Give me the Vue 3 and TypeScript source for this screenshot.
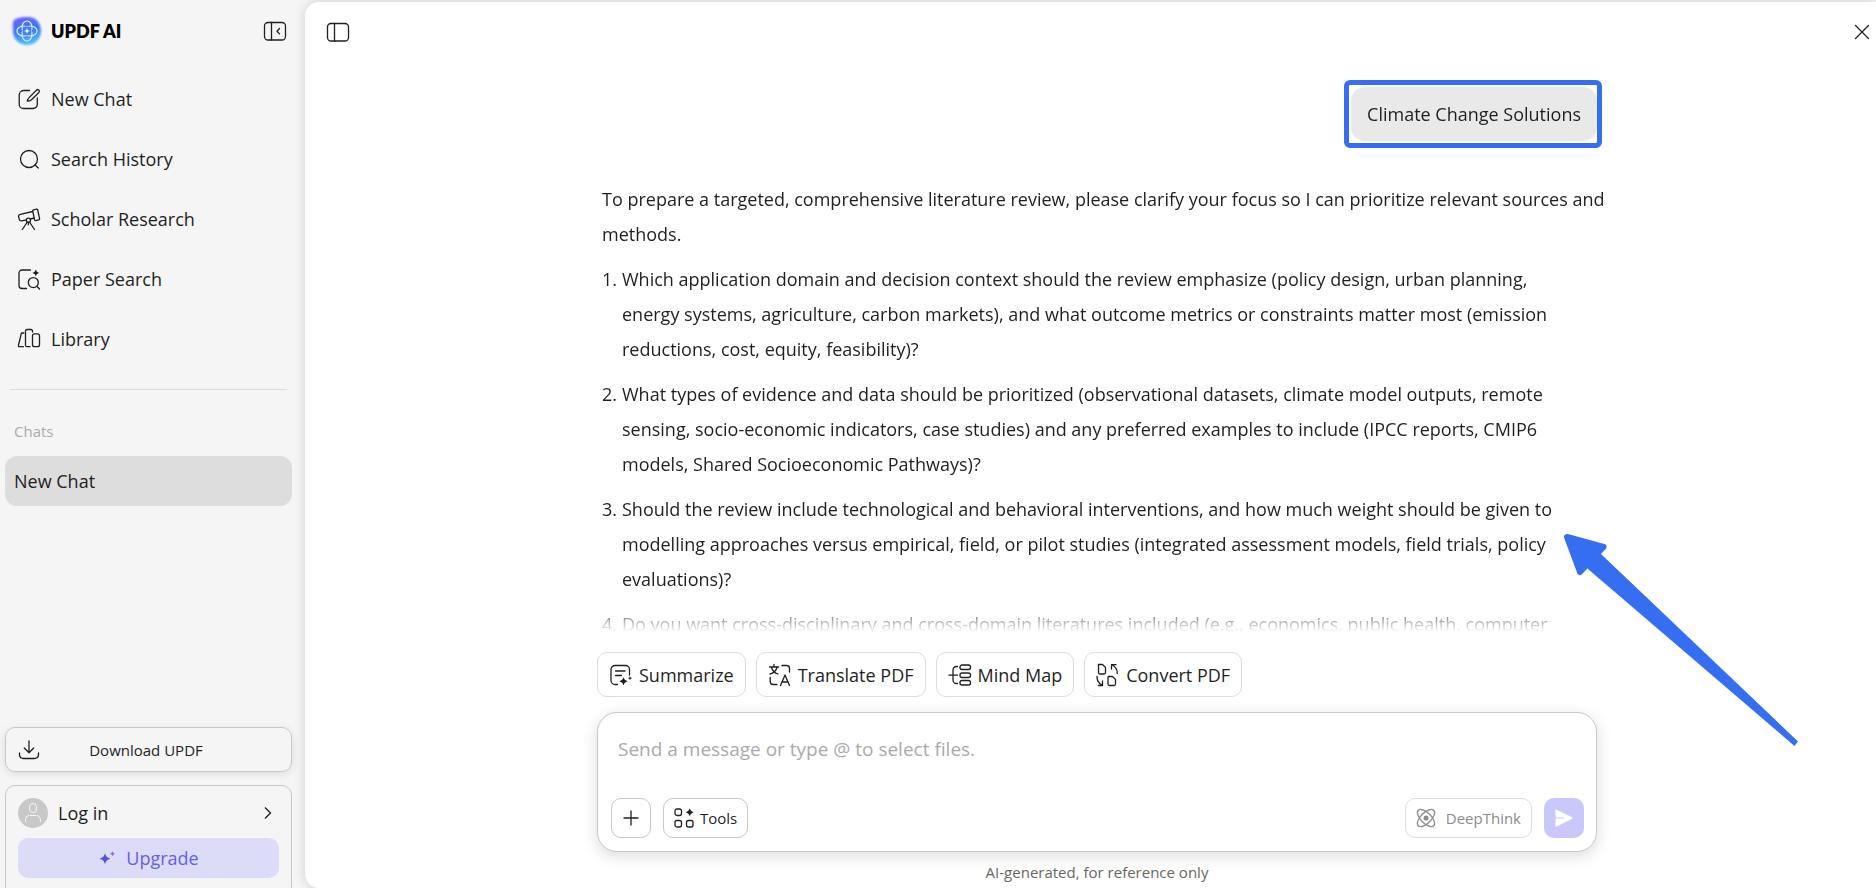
<script setup lang="ts">
import { ref } from 'vue'

interface NavItem { id: string; label: string }
interface Chip { id: string; label: string }

const navItems: NavItem[] = [
  { id: 'new', label: 'New Chat' },
  { id: 'search', label: 'Search History' },
  { id: 'scholar', label: 'Scholar Research' },
  { id: 'paper', label: 'Paper Search' },
  { id: 'library', label: 'Library' },
]

const chips: Chip[] = [
  { id: 'summarize', label: 'Summarize' },
  { id: 'translate', label: 'Translate PDF' },
  { id: 'mindmap', label: 'Mind Map' },
  { id: 'convert', label: 'Convert PDF' },
]

const questions: string[] = [
  'Which application domain and decision context should the review emphasize (policy design, urban planning, energy systems, agriculture, carbon markets), and what outcome metrics or constraints matter most (emission reductions, cost, equity, feasibility)?',
  'What types of evidence and data should be prioritized (observational datasets, climate model outputs, remote sensing, socio-economic indicators, case studies) and any preferred examples to include (IPCC reports, CMIP6 models, Shared Socioeconomic Pathways)?',
  'Should the review include technological and behavioral interventions, and how much weight should be given to modelling approaches versus empirical, field, or pilot studies (integrated assessment models, field trials, policy evaluations)?',
  'Do you want cross-disciplinary and cross-domain literatures included (e.g., economics, public health, computer',
]

const draft = ref('')
</script>

<template>
  <div class="app">
    <aside class="sidebar">
      <header class="brand">
        <svg class="logo" viewBox="0 0 30 30" aria-hidden="true">
          <defs>
            <linearGradient id="logoFill" x1="0.3" y1="0" x2="0.5" y2="1">
              <stop offset="0" stop-color="#6a63f5" />
              <stop offset="0.5" stop-color="#3b7bf6" />
              <stop offset="1" stop-color="#4fc4ff" />
            </linearGradient>
            <filter id="logoSoft" x="-10%" y="-10%" width="120%" height="120%">
              <feGaussianBlur stdDeviation="0.8" />
            </filter>
          </defs>
          <path d="M2 4C6 1 11 1 16 1c8 0 13 6 13 14 0 8-6 14-14 14S1 23 1 15C1 11 0 6 2 4z" fill="url(#logoFill)" filter="url(#logoSoft)" />
          <g fill="none" stroke="#d8ecff" stroke-width="1.2">
            <ellipse cx="15" cy="11.500" rx="5" ry="6.500" />
            <ellipse cx="15" cy="18.500" rx="5" ry="6.500" />
            <ellipse cx="11.500" cy="15" rx="6.500" ry="5" />
            <ellipse cx="18.500" cy="15" rx="6.500" ry="5" />
          </g>
          <circle cx="15" cy="15" r="4.500" fill="#3f7ff6" />
          <path d="M15 12l.8 2.200 2.200.8-2.200.8-.8 2.200-.8-2.200-2.200-.8 2.200-.8z" fill="#fff" />
        </svg>
        <span class="brand-name">UPDF AI</span>
        <button class="icon-btn" type="button" aria-label="Collapse sidebar">
          <svg class="ico" viewBox="0 0 24 24">
            <rect x="1.500" y="3.500" width="21" height="17.500" rx="3.500" />
            <path d="M8.500 3.500v17.500M16.500 9.500l-2.500 2.700 2.500 2.700" />
          </svg>
        </button>
      </header>

      <nav class="nav">
        <button v-for="item in navItems" :key="item.id" class="nav-item" type="button">
          <svg class="ico" viewBox="0 0 24 24" aria-hidden="true">
            <template v-if="item.id === 'new'">
              <path d="M12.500 3.500H6.500A4.500 4.500 0 0 0 2.200 8v9.200a4.300 4.300 0 0 0 4.300 4.300H16a4.300 4.300 0 0 0 4.300-4.300V11" />
              <path d="M10.300 14.200c.2-1.600.8-2.600 1.800-3.600l7.300-7.400a1.600 1.600 0 0 1 2.500 2.300l-7.400 7.200c-1 1-2.500 1.500-4.200 1.500z" />
            </template>
            <template v-else-if="item.id === 'search'">
              <circle cx="12" cy="12" r="8.500" />
              <path d="M18 18l3.300 3" />
            </template>
            <template v-else-if="item.id === 'scholar'">
              <path d="M16.500 2.900l3-.7a1 1 0 0 1 1.200.8l1.900 8.700a1 1 0 0 1-.8 1.200l-3 .7a1 1 0 0 1-1.200-.8L15.700 4a1 1 0 0 1 .8-1.100zM15.700 4.500L3.300 7.300a2 2 0 0 0-1.700 2.300l.7 2.700a2 2 0 0 0 2.400 1.500l4.700-1M13.400 12l4-1" />
              <circle cx="11.400" cy="13.200" r="2.100" />
              <path d="M10.300 15l-5 7.500M12.500 15l5 7.500M11.400 15.300v2.500" />
            </template>
            <template v-else-if="item.id === 'paper'">
              <path d="M13.500 3H5a3 3 0 0 0-3 3v12.500a3 3 0 0 0 3 3h4.500" />
              <circle cx="16.300" cy="15.600" r="5" />
              <path d="M20 19.500l2.500 2.500" />
              <path class="solid" d="M18.800 2.500l1.100 2.300 2.300 1.100-2.300 1.100-1.100 2.300-1.100-2.300-2.300-1.100 2.300-1.100z" />
            </template>
            <template v-else>
              <path d="M6.800 6H5.200a1 1 0 0 0-1 .8L1.400 18.500a1 1 0 0 0 1 1.200h4M15.500 5V4a1.500 1.500 0 0 0-1.500-1.500h-4A1.500 1.500 0 0 0 8.500 4v14.200a1.500 1.500 0 0 0 1.500 1.500h3" />
              <rect x="15.500" y="6.800" width="7" height="12.900" rx="2" />
            </template>
          </svg>
          {{ item.label }}
        </button>
      </nav>

      <section class="history">
        <h2>Chats</h2>
        <button class="history-item" type="button">New Chat</button>
      </section>

      <footer class="account-area">
        <button class="download" type="button">
          <svg class="ico" viewBox="0 0 24 24" aria-hidden="true">
            <path d="M12 3v11.500M7.300 10l4.700 4.700 4.700-4.700M2.500 15v1.800A4 4 0 0 0 6.500 20.500h11a4 4 0 0 0 4-3.700V15" />
          </svg>
          <span>Download UPDF</span>
        </button>
        <div class="account">
          <button class="login" type="button">
            <span class="avatar">
              <svg viewBox="0 0 30 30" aria-hidden="true">
                <rect x="11.500" y="5.500" width="7" height="9" rx="3.500" />
                <path d="M7.500 24v-2.500a4 4 0 0 1 4-4h7a4 4 0 0 1 4 4V24" />
              </svg>
            </span>
            <span class="login-label">Log in</span>
            <svg class="chevron" viewBox="0 0 12 12" aria-hidden="true"><path d="M3 0.500l5.500 5.500-5.500 5.500" /></svg>
          </button>
          <button class="upgrade" type="button">
            <svg viewBox="0 0 18 18" aria-hidden="true">
              <path d="M7 4c.9 3.600 1.900 4.600 5.500 5.700-3.600 1.100-4.600 2.100-5.500 5.700-.9-3.600-1.900-4.600-5.500-5.700C5.100 8.600 6.100 7.600 7 4z" fill="#5450e6" />
              <path d="M14.500 2c.4 1.700.9 2.300 2.700 2.800-1.800.5-2.300 1.100-2.700 2.800-.4-1.700-.9-2.300-2.700-2.800 1.800-.5 2.300-1.100 2.700-2.800z" fill="#a05fe8" />
            </svg>
            Upgrade
          </button>
        </div>
      </footer>
    </aside>

    <main class="main">
      <header class="topbar">
        <button class="icon-btn" type="button" aria-label="Toggle panel">
          <svg class="ico" viewBox="0 0 24 24">
            <rect x="1.500" y="3.500" width="21" height="17.500" rx="3.500" />
            <path d="M8.500 3.500v17.500" />
          </svg>
        </button>
        <button class="icon-btn" type="button" aria-label="Close">
          <svg class="ico" viewBox="0 0 24 24"><path d="M5.500 5.500l13 13M18.500 5.500l-13 13" /></svg>
        </button>
      </header>

      <div class="thread">
        <div class="column">
          <div class="prompt">
            <div class="highlight"><p class="bubble">Climate Change Solutions</p></div>
          </div>
          <article class="answer">
            <p>To prepare a targeted, comprehensive literature review, please clarify your focus so I can prioritize relevant sources and methods.</p>
            <ol>
              <li v-for="(question, index) in questions" :key="index">
                <span>{{ index + 1 }}.</span>
                <p>{{ question }}</p>
              </li>
            </ol>
          </article>
        </div>
      </div>

      <div class="dock">
        <div class="column">
          <svg class="pointer" viewBox="0 0 236 214" aria-hidden="true">
            <path d="M4 5L38.500 22.500L235 209.500L231.500 214L25 37z" />
            <path class="pointer-head" d="M4 5L40.500 15L17 40z" />
          </svg>
          <div class="chips">
            <button v-for="chip in chips" :key="chip.id" class="chip" type="button">
              <svg class="ico" viewBox="0 0 24 24" aria-hidden="true">
                <template v-if="chip.id === 'summarize'">
                  <path d="M8.500 21.500H6a4 4 0 0 1-4-4v-11a4 4 0 0 1 4-4h10.500a4 4 0 0 1 4 4V12M6.500 8H16M6.500 12.500h6" />
                  <path class="solid" d="M14.500 14c.8 2.600 1.600 3.400 4.200 4.200-2.600.8-3.400 1.600-4.200 4.200-.8-2.600-1.600-3.400-4.200-4.200 2.600-.8 3.400-1.600 4.200-4.200zM21 13l.6 1.600 1.600.6-1.600.6-.6 1.600-.6-1.600-1.600-.6 1.600-.6z" />
                </template>
                <template v-else-if="chip.id === 'translate'">
                  <path d="M6 1.500V4M1.500 4h9M9 4.500c-.8 3-3 5.500-7 6.500M3.500 4.500c.8 3 3 5.500 6.500 6.500" />
                  <path d="M14 2.500h4.500a3 3 0 0 1 3 3V9M2.200 14.500v4a3 3 0 0 0 3 3H9" />
                  <path d="M12.500 22.500l4.500-10.500 4.500 10.500M14 19h6" />
                </template>
                <template v-else-if="chip.id === 'mindmap'">
                  <rect x="12" y="2" width="10.500" height="4.500" rx="2" />
                  <rect x="12" y="10" width="10.500" height="4.500" rx="2" />
                  <rect x="12" y="17.500" width="10.500" height="4.500" rx="2" />
                  <path d="M9.500 3.500H8.500a3.500 3.500 0 0 0-3.500 3.500v10a3.500 3.500 0 0 0 3.500 3.500h1M1 12.200h8.500" />
                </template>
                <template v-else>
                  <path d="M2.500 1.500h4l3 3V9.500a1.500 1.500 0 0 1-1.500 1.500H4A1.500 1.500 0 0 1 2.500 9.500z" />
                  <path d="M12.500 13.500h4l3 3v4.500a1.500 1.500 0 0 1-1.500 1.500h-4.500A1.500 1.500 0 0 1 12 21v-7z" />
                  <path d="M21.300 10.500c0-4-1.500-7-5.300-8.500M15.500 6V1.700H20M1 13.500c0 4 1.500 7 5.300 8.500M2.500 22.500h4V18" />
                </template>
              </svg>
              {{ chip.label }}
            </button>
          </div>

          <form class="composer" @submit.prevent>
            <textarea v-model="draft" rows="1" aria-label="Message" placeholder="Send a message or type @ to select files."></textarea>
            <div class="tools">
              <button class="tool square" type="button" aria-label="Add file">
                <svg class="ico small" viewBox="0 0 20 20"><path d="M10 3v14M3 10h14" /></svg>
              </button>
              <button class="tool" type="button">
                <svg class="ico small" viewBox="0 0 20 20" aria-hidden="true">
                  <rect x="1" y="1" width="6.500" height="6.500" rx="2" />
                  <rect x="1" y="12.500" width="6.500" height="6.500" rx="2" />
                  <rect x="12.500" y="12.500" width="6.500" height="6.500" rx="2" />
                  <path class="solid" d="M15.700.3c.9 2.500 1.500 3.100 4 4-2.500.9-3.100 1.500-4 4-.9-2.500-1.500-3.100-4-4 2.500-.9 3.100-1.500 4-4z" />
                </svg>
                Tools
              </button>
              <button class="tool think" type="button">
                <svg class="ico small" viewBox="0 0 20 20" aria-hidden="true">
                  <ellipse cx="10" cy="10" rx="11" ry="5.200" transform="rotate(45 10 10)" />
                  <ellipse cx="10" cy="10" rx="11" ry="5.200" transform="rotate(-45 10 10)" />
                  <circle class="core" cx="10" cy="10" r="2.500" />
                </svg>
                DeepThink
              </button>
              <button class="send" type="submit" aria-label="Send">
                <svg viewBox="0 0 20 20"><path d="M2.500 1.500L18 9.200a1 1 0 0 1 0 1.800L2.500 18.500a1 1 0 0 1-1.300-1.200L1.800 10.500H9.500V9.500H1.800L1.200 2.700A1 1 0 0 1 2.500 1.500z" /></svg>
              </button>
            </div>
          </form>
          <p class="notice">AI-generated, for reference only</p>
        </div>
      </div>
    </main>
  </div>
</template>

<style>
body {
  margin: 0;
  background: #f5f5f5;
}
</style>

<style scoped>
.app,
.app * {
  box-sizing: border-box;
}

.app {
  display: flex;
  height: 100vh;
  overflow: hidden;
  background: #f5f5f5;
  color: #1f1f1f;
  font: 18px/24px "Open Sans", "Noto Sans", sans-serif;
}

p,
h2,
ol {
  margin: 0;
  padding: 0;
}

button {
  margin: 0;
  padding: 0;
  border: 0;
  background: none;
  color: inherit;
  font: inherit;
  cursor: pointer;
}

.ico {
  flex: none;
  width: 24px;
  height: 24px;
  fill: none;
  stroke: currentColor;
  stroke-width: 1.3;
  stroke-linecap: round;
  stroke-linejoin: round;
  overflow: visible;
}

.ico.small {
  width: 20px;
  height: 20px;
}

.solid,
.core {
  fill: currentColor;
  stroke: none;
}

.icon-btn {
  display: flex;
}

.sidebar {
  display: flex;
  flex: none;
  flex-direction: column;
  width: 305px;
  padding: 0 13px 0 5px;
}

.brand {
  display: flex;
  align-items: center;
  height: 62px;
  padding: 0 5px 0 7px;
}

.logo {
  width: 30px;
  height: 30px;
  overflow: visible;
}

.brand-name {
  flex: 1;
  margin-left: 9px;
  color: #000;
  font: 800 18px/24px Lato, sans-serif;
}

.nav {
  display: flex;
  flex-direction: column;
  gap: 10px;
  margin: 12px 5px 0;
  padding-bottom: 25px;
  border-bottom: 1px solid #dcdce2;
}

.nav-item {
  display: flex;
  align-items: center;
  gap: 10px;
  height: 50px;
  padding: 0 7px;
}

.history {
  flex: 1;
  padding-top: 29px;
}

.history h2 {
  margin-bottom: 13px;
  padding-left: 9px;
  color: #aaa;
  font-size: 15px;
  font-weight: 400;
}

.history-item {
  width: 100%;
  height: 50px;
  padding: 0 9px;
  border-radius: 12px;
  background: #ddd;
  text-align: left;
}

.download {
  display: flex;
  align-items: center;
  width: 100%;
  height: 45px;
  padding: 0 40px 0 11px;
  border: 1px solid #c8c8c8;
  border-radius: 10px;
  box-shadow: 0 2px 8px rgba(0, 0, 0, 0.1);
  font-size: 15px;
}

.download span {
  flex: 1;
}

.account {
  height: 116px;
  margin: 13px 0 -13px;
  padding: 12px 12px 0;
  border: 1px solid #c8c8c8;
  border-radius: 10px;
}

.login {
  display: flex;
  align-items: center;
  width: 100%;
  height: 30px;
  padding-right: 5px;
}

.avatar {
  width: 30px;
  height: 30px;
  border-radius: 50%;
  background: #c8c8c8;
}

.avatar svg {
  display: block;
  fill: none;
  stroke: #f5f5f5;
}

.login-label {
  flex: 1;
  margin-left: 10px;
  text-align: left;
}

.chevron {
  width: 12px;
  height: 12px;
  fill: none;
  stroke: currentColor;
  stroke-width: 1.3;
}

.upgrade {
  display: flex;
  align-items: center;
  justify-content: center;
  gap: 10px;
  width: 100%;
  height: 40px;
  margin-top: 10px;
  border-radius: 10px;
  background: #dcdcf9;
  color: #6460e0;
}

.upgrade svg {
  width: 18px;
  height: 18px;
}

.main {
  display: flex;
  flex: 1;
  flex-direction: column;
  min-width: 0;
  margin-top: 2px;
  border-radius: 14px 0 0 14px;
  background: #fff;
  box-shadow: 0 0 12px rgba(0, 0, 0, 0.16);
}

.topbar {
  display: flex;
  flex: none;
  align-items: center;
  justify-content: space-between;
  height: 60px;
  padding: 0 2px 0 21px;
}

.column {
  position: relative;
  width: 100%;
  max-width: 1000px;
  margin: 0 auto;
}

.thread,
.dock {
  padding-left: 13px;
}

.thread {
  flex: 1;
  min-height: 0;
  overflow: hidden;
  mask-image: linear-gradient(#000 calc(100% - 30px), transparent);
}

.prompt {
  display: flex;
  justify-content: flex-end;
  padding: 18px 0 34px;
}

.highlight {
  margin-right: -5px;
  padding: 2px 0 2px 2px;
  border: 5px solid #356ef1;
  border-radius: 6px;
}

.bubble {
  padding: 15px 16px;
  border-radius: 14px;
  background: #e9e9e9;
}

.answer {
  margin-right: -12px;
  padding-left: 5px;
  line-height: 35px;
}

.answer ol {
  padding-right: 32px;
  list-style: none;
}

.answer li {
  display: flex;
  margin-top: 10px;
}

.answer li span {
  flex: none;
  width: 20px;
}

.dock {
  flex: none;
  padding-top: 20px;
}

.pointer {
  position: absolute;
  bottom: 142px;
  left: calc(100% - 34px);
  z-index: 1;
  width: 236px;
  height: 214px;
  fill: #356ef1;
}

.pointer-head {
  stroke: #356ef1;
  stroke-width: 6;
  stroke-linejoin: round;
}

.chips {
  display: flex;
  gap: 10px;
}

.chip {
  display: flex;
  align-items: center;
  gap: 6px;
  height: 45px;
  padding: 0 11px;
  border: 1px solid #dcdce2;
  border-radius: 10px;
  background: #fff;
}

.composer {
  display: flex;
  flex-direction: column;
  height: 140px;
  margin-top: 15px;
  padding: 24px 12px 13px 13px;
  border: 1px solid #c8c8c8;
  border-radius: 20px;
  background: #fff;
  box-shadow: 0 4px 16px rgba(0, 0, 0, 0.14);
}

.composer textarea {
  flex: 1;
  width: 100%;
  padding: 0 7px;
  border: 0;
  outline: 0;
  background: none;
  color: inherit;
  font: 500 19px/24px "Open Sans", "Noto Sans", sans-serif;
  resize: none;
}

.composer textarea::placeholder {
  color: #aaa;
  opacity: 1;
}

.tools {
  display: flex;
  gap: 12px;
}

.tool {
  display: flex;
  align-items: center;
  justify-content: center;
  gap: 6px;
  height: 40px;
  padding: 0 10px;
  border: 1px solid #c8c8c8;
  border-radius: 10px;
  font-size: 15px;
}

.tool.square {
  width: 40px;
}

.tool.think {
  gap: 10px;
  margin-left: auto;
  border-color: #dedede;
  color: #8c8c8c;
}

.send {
  display: flex;
  align-items: center;
  justify-content: center;
  width: 40px;
  height: 40px;
  border-radius: 10px;
  background: #c8c8fd;
}

.send svg {
  width: 20px;
  height: 20px;
  fill: #fff;
}

.notice {
  padding-top: 4px;
  color: #666;
  font-size: 15px;
  line-height: 32px;
  text-align: center;
}
</style>
